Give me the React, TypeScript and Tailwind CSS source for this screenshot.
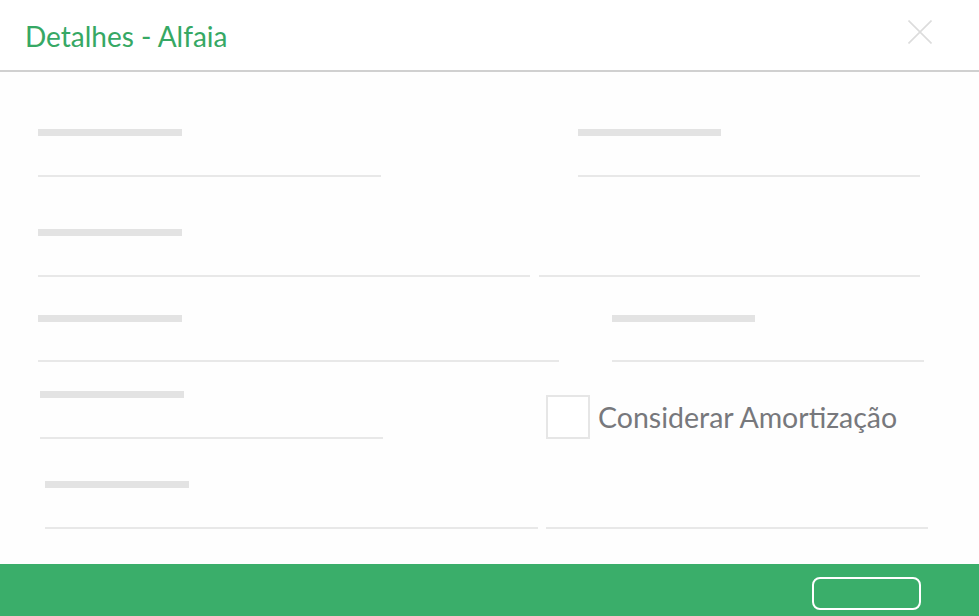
import React from "react";

function Bar({ w }: { w: string }) {
  return <div className={`h-[7px] bg-[#e3e3e3] ${w}`} />;
}

function Line({ w }: { w: string }) {
  return <div className={`h-[2px] bg-[#e8e8e8] ${w}`} />;
}

export default function App() {
  return (
    <div className="flex h-[616px] w-[979px] flex-col overflow-hidden bg-[#fefefe] font-['Lato',sans-serif]">
      <header className="flex h-[72px] shrink-0 items-center justify-between border-b-2 border-[#d0d0d0] bg-white pl-[25px] pr-[47px]">
        <h1 className="pt-[2px] text-[28px] leading-none text-[#36a864]">Detalhes - Alfaia</h1>
        <svg width="24" height="24" viewBox="0 0 24 24" className="mb-[6px]">
          <path d="M0.5 0.5 L23.5 23.5 M23.5 0.5 L0.5 23.5" stroke="#dcdcdc" strokeWidth="1.6" fill="none" />
        </svg>
      </header>

      <main className="flex-1">
        {/* row 1 */}
        <div className="flex pt-[57px]">
          <div className="ml-[38px] flex w-[343px] flex-col gap-[39px]">
            <Bar w="w-[144px]" />
            <Line w="w-full" />
          </div>
          <div className="ml-[197px] flex w-[342px] flex-col gap-[39px]">
            <Bar w="w-[143px]" />
            <Line w="w-full" />
          </div>
        </div>

        {/* row 2 */}
        <div className="flex items-end pt-[52px]">
          <div className="ml-[38px] flex w-[492px] flex-col gap-[39px]">
            <Bar w="w-[144px]" />
            <Line w="w-full" />
          </div>
          <div className="ml-[9px] w-[381px]">
            <Line w="w-full" />
          </div>
        </div>

        {/* row 3 */}
        <div className="flex pt-[38px]">
          <div className="ml-[38px] flex w-[521px] flex-col gap-[38px]">
            <Bar w="w-[144px]" />
            <Line w="w-full" />
          </div>
          <div className="ml-[53px] flex w-[312px] flex-col gap-[38px]">
            <Bar w="w-[143px]" />
            <Line w="w-full" />
          </div>
        </div>

        {/* row 4 */}
        <div className="flex items-start pt-[29px]">
          <div className="ml-[40px] flex w-[343px] flex-col gap-[39px]">
            <Bar w="w-[144px]" />
            <Line w="w-full" />
          </div>
          <label className="ml-[163px] mt-[4px] flex items-center gap-[8px]">
            <span className="block h-[44px] w-[44px] border-2 border-[#e6e6e6] bg-white" />
            <span className="text-[28.5px] leading-none text-[#77787c]">Considerar Amortização</span>
          </label>
        </div>

        {/* row 5 */}
        <div className="flex items-end pt-[42px]">
          <div className="ml-[45px] flex w-[493px] flex-col gap-[39px]">
            <Bar w="w-[144px]" />
            <Line w="w-full" />
          </div>
          <div className="ml-[8px] w-[382px]">
            <Line w="w-full" />
          </div>
        </div>
      </main>

      <footer className="flex h-[52px] shrink-0 items-start justify-end bg-[#3aae6a] pr-[58px] pt-[13px]">
        <button type="button" className="h-[33px] w-[109px] rounded-[8px] border-2 border-white" />
      </footer>
    </div>
  );
}
